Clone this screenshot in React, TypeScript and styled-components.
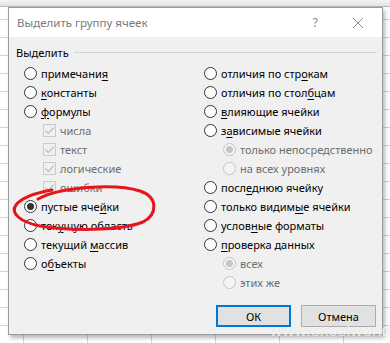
import { FC } from 'react'
import styled, { createGlobalStyle } from 'styled-components'

// ==============================|| global ||============================== //
const GlobalStyle = createGlobalStyle`
  html, body {
    margin: 0;
    padding: 0;
    background: #fff;
  }
  body {
    font-family: 'Noto Sans', 'Liberation Sans', sans-serif;
  }
`

// ==============================|| data ||============================== //
type Item = {
  kind: 'radio' | 'check' | 'subradio'
  label: string
  u?: number
  checked?: boolean
  disabled?: boolean
}

const leftItems: Item[] = [
  { kind: 'radio', label: 'примечания', u: 9 },
  { kind: 'radio', label: 'константы', u: 0 },
  { kind: 'radio', label: 'формулы', u: 0 },
  { kind: 'check', label: 'числа', checked: true, disabled: true },
  { kind: 'check', label: 'текст', checked: true, disabled: true },
  { kind: 'check', label: 'логические', checked: true, disabled: true },
  { kind: 'check', label: 'ошибки', checked: true, disabled: true },
  { kind: 'radio', label: 'пустые ячейки', u: 10, checked: true },
  { kind: 'radio', label: 'текущую область', u: 3 },
  { kind: 'radio', label: 'текущий массив', u: 8 },
  { kind: 'radio', label: 'объекты', u: 1 }
]

const rightItems: Item[] = [
  { kind: 'radio', label: 'отличия по строкам', u: 14 },
  { kind: 'radio', label: 'отличия по столбцам', u: 15 },
  { kind: 'radio', label: 'влияющие ячейки', u: 0 },
  { kind: 'radio', label: 'зависимые ячейки', u: 1 },
  { kind: 'subradio', label: 'только непосредственно', checked: true, disabled: true },
  { kind: 'subradio', label: 'на всех уровнях', disabled: true },
  { kind: 'radio', label: 'последнюю ячейку', u: 4 },
  { kind: 'radio', label: 'только видимые ячейки', u: 12 },
  { kind: 'radio', label: 'условные форматы', u: 5 },
  { kind: 'radio', label: 'проверка данных', u: 0 },
  { kind: 'subradio', label: 'всех', checked: true, disabled: true },
  { kind: 'subradio', label: 'этих же', disabled: true }
]

// ==============================|| parts ||============================== //
const Label: FC<{ text: string; u?: number }> = ({ text, u }) => {
  if (u === undefined) return <>{text}</>
  return (
    <>
      {text.slice(0, u)}
      <u>{text[u]}</u>
      {text.slice(u + 1)}
    </>
  )
}

const Option: FC<{ item: Item }> = ({ item }) => (
  <Row $indent={item.kind !== 'radio'} $disabled={!!item.disabled}>
    {item.kind === 'check' ? (
      <CheckBox $disabled={!!item.disabled}>
        {item.checked && (
          <svg width="11" height="11" viewBox="0 0 11 11">
            <path d="M1.5 5.5 L4.3 8.3 L9.8 2.6" fill="none" stroke="#b9b9b9" strokeWidth="1.2" />
          </svg>
        )}
      </CheckBox>
    ) : (
      <RadioCircle $disabled={!!item.disabled} $checked={!!item.checked} />
    )}
    <span>
      <Label text={item.label} u={item.u} />
    </span>
  </Row>
)

// ==============================|| index ||============================== //
const App: FC = () => {
  return (
    <Sheet>
      <GlobalStyle />
      <HeaderStrip />
      <Dialog>
        <TitleBar>
          <Title>Выделить группу ячеек</Title>
          <TitleButtons>
            <Help>?</Help>
            <svg width="12" height="12" viewBox="0 0 12 12">
              <path d="M1 1 L11 11 M11 1 L1 11" stroke="#8c8c8c" strokeWidth="1" />
            </svg>
          </TitleButtons>
        </TitleBar>

        <Body>
          <Group>
            <GroupLabel>Выделить</GroupLabel>
            <GroupLine />
          </Group>

          <Columns>
            <Column>
              {leftItems.map(it => (
                <Option key={it.label} item={it} />
              ))}
            </Column>
            <Column>
              {rightItems.map(it => (
                <Option key={it.label} item={it} />
              ))}
            </Column>
          </Columns>

          <Buttons>
            <Button $primary>ОК</Button>
            <Button>Отмена</Button>
          </Buttons>
        </Body>
      </Dialog>

      <Scribble width="390" height="344" viewBox="0 0 390 344">
        <path
          d="M38 199 C60 187, 115 183, 140 191 C158 197, 158 214, 143 222 C120 231, 70 231, 40 226 C20 222, 10 213, 16 205 C22 197, 35 193, 52 190"
          fill="none"
          stroke="#e8141c"
          strokeWidth="3"
          strokeLinecap="round"
        />
      </Scribble>

      <Watermark>www.excelworld.ru</Watermark>
    </Sheet>
  )
}

const Sheet = styled.div`
  position: relative;
  width: 390px;
  height: 344px;
  overflow: hidden;
  box-sizing: border-box;
  padding: 0 0 0 8px;
  background-color: #fff;
  background-image: repeating-linear-gradient(
      to right,
      transparent 0,
      transparent 23px,
      #d4d4d4 23px,
      #d4d4d4 24px,
      transparent 24px,
      transparent 64px
    ),
    repeating-linear-gradient(to bottom, transparent 0, transparent 17px, #d4d4d4 17px, #d4d4d4 18px);
  background-position: 0 0, 0 2px;
`

const HeaderStrip = styled.div`
  height: 7px;
  margin-left: -8px;
  background: linear-gradient(#f4f4f4, #e2e2e2);
  border-bottom: 1px solid #b8b8b8;
  box-sizing: border-box;
`

const Dialog = styled.div`
  width: 375px;
  height: 328px;
  box-sizing: border-box;
  border: 1px solid #9c9c9c;
  background: #f0f0f0;
  box-shadow: 2px 3px 4px rgba(0, 0, 0, 0.28);
  display: flex;
  flex-direction: column;
`

const TitleBar = styled.div`
  height: 29px;
  background: #fff;
  display: flex;
  align-items: center;
  justify-content: space-between;
  padding: 0 18px 0 8px;
`

const Title = styled.div`
  font-size: 11.5px;
  color: #7a7a7a;
`

const TitleButtons = styled.div`
  display: flex;
  align-items: center;
  gap: 34px;
`

const Help = styled.span`
  font-size: 12px;
  color: #8c8c8c;
`

const Body = styled.div`
  flex: 1;
  display: flex;
  flex-direction: column;
  padding: 7px 6px 0 7px;
`

const Group = styled.div`
  display: flex;
  align-items: center;
  gap: 5px;
  height: 16px;
`

const GroupLabel = styled.span`
  font-size: 11px;
  color: #000;
`

const GroupLine = styled.div`
  flex: 1;
  height: 1px;
  background: #d5d5d5;
`

const Columns = styled.div`
  display: grid;
  grid-template-columns: 180px 1fr;
  margin-top: 4px;
  padding-left: 8px;
`

const Column = styled.div`
  display: flex;
  flex-direction: column;
`

const Row = styled.div<{ $indent: boolean; $disabled: boolean }>`
  height: 19px;
  display: flex;
  align-items: center;
  gap: 4px;
  padding-left: ${p => (p.$indent ? '19px' : '0')};
  font-size: 11px;
  color: ${p => (p.$disabled ? '#6d6d6d' : '#000')};
  white-space: nowrap;

  u {
    text-decoration-thickness: 1px;
    text-underline-offset: 2px;
  }
`

const RadioCircle = styled.span<{ $disabled: boolean; $checked: boolean }>`
  width: 13px;
  height: 13px;
  flex: none;
  box-sizing: border-box;
  border-radius: 50%;
  border: 1px solid ${p => (p.$disabled ? '#c5c5c5' : '#333')};
  background: ${p => (p.$disabled ? '#f4f4f4' : '#fff')};
  display: flex;
  align-items: center;
  justify-content: center;

  &::after {
    content: '';
    display: ${p => (p.$checked ? 'block' : 'none')};
    width: 7px;
    height: 7px;
    border-radius: 50%;
    background: ${p => (p.$disabled ? '#c5c5c5' : '#333')};
  }
`

const CheckBox = styled.span<{ $disabled: boolean }>`
  width: 13px;
  height: 13px;
  flex: none;
  box-sizing: border-box;
  border: 1px solid ${p => (p.$disabled ? '#cacaca' : '#333')};
  background: ${p => (p.$disabled ? '#f0f0f0' : '#fff')};
  display: flex;
  align-items: center;
  justify-content: center;
`

const Buttons = styled.div`
  display: flex;
  justify-content: flex-end;
  gap: 10px;
  margin-top: 13px;
`

const Button = styled.button<{ $primary?: boolean }>`
  width: 75px;
  height: 22px;
  box-sizing: border-box;
  padding: 0;
  font-family: 'Noto Sans', 'Liberation Sans', sans-serif;
  font-size: 11px;
  color: #000;
  background: #e1e1e1;
  border: ${p => (p.$primary ? '2px solid #0078d7' : '1px solid #adadad')};
`

const Scribble = styled.svg`
  position: absolute;
  left: 0;
  top: 0;
  pointer-events: none;
`

const Watermark = styled.div`
  position: absolute;
  left: 270px;
  top: 321px;
  font-family: 'Liberation Sans', sans-serif;
  font-size: 17px;
  color: rgba(255, 255, 255, 0.75);
  text-shadow: 0 0 1px rgba(0, 0, 0, 0.12);
  pointer-events: none;
`

export default App
